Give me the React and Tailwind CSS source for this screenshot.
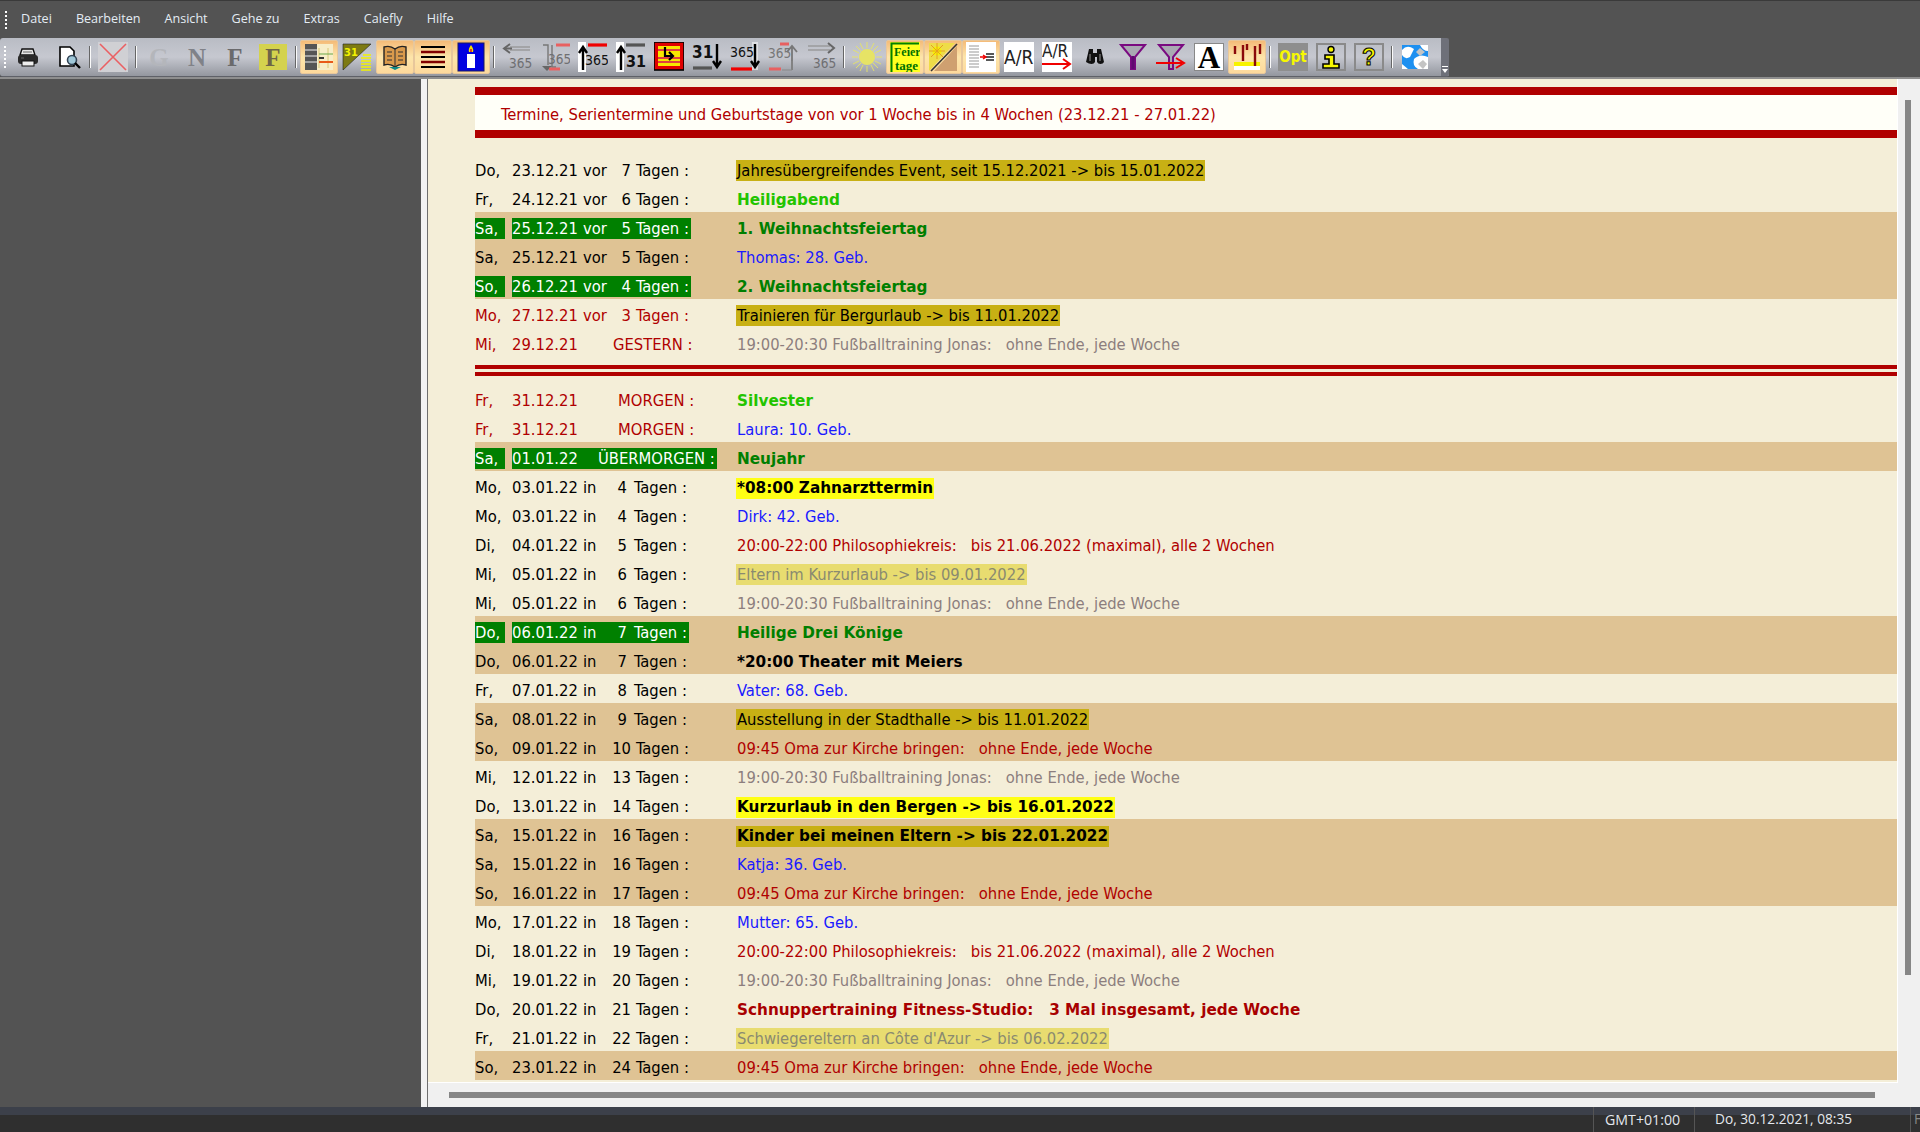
import React from 'react'

const rowsTop = [
  { d: 'Do,', date: '23.12.21', w: 'vor', n: '7', ev: 'Jahresübergreifendes Event, seit 15.12.2021 -> bis 15.01.2022', k: 'olive' },
  { d: 'Fr,', date: '24.12.21', w: 'vor', n: '6', ev: 'Heiligabend', k: 'lime' },
  { d: 'Sa,', date: '25.12.21', w: 'vor', n: '5', ev: '1. Weihnachtsfeiertag', k: 'hol', band: true, green: true },
  { d: 'Sa,', date: '25.12.21', w: 'vor', n: '5', ev: 'Thomas: 28. Geb.', k: 'blue', band: true },
  { d: 'So,', date: '26.12.21', w: 'vor', n: '4', ev: '2. Weihnachtsfeiertag', k: 'hol', band: true, green: true },
  { d: 'Mo,', date: '27.12.21', w: 'vor', n: '3', ev: 'Trainieren für Bergurlaub -> bis 11.01.2022', k: 'olive', red: true },
  { d: 'Mi,', date: '29.12.21', label: 'GESTERN :', pad: 'pl-[101px]', ev: '19:00-20:30 Fußballtraining Jonas:   ohne Ende, jede Woche', k: 'gray', red: true },
]

const rowsBottom = [
  { d: 'Fr,', date: '31.12.21', label: 'MORGEN :', pad: 'pl-[106px]', ev: 'Silvester', k: 'lime', red: true },
  { d: 'Fr,', date: '31.12.21', label: 'MORGEN :', pad: 'pl-[106px]', ev: 'Laura: 10. Geb.', k: 'blue', red: true },
  { d: 'Sa,', date: '01.01.22', label: 'ÜBERMORGEN :', pad: 'pl-[86px]', ev: 'Neujahr', k: 'hol', band: true, green: true },
  { d: 'Mo,', date: '03.01.22', w: 'in', n: '4', ev: '*08:00 Zahnarzttermin', k: 'yellowBold' },
  { d: 'Mo,', date: '03.01.22', w: 'in', n: '4', ev: 'Dirk: 42. Geb.', k: 'blue' },
  { d: 'Di,', date: '04.01.22', w: 'in', n: '5', ev: '20:00-22:00 Philosophiekreis:   bis 21.06.2022 (maximal), alle 2 Wochen', k: 'red' },
  { d: 'Mi,', date: '05.01.22', w: 'in', n: '6', ev: 'Eltern im Kurzurlaub -> bis 09.01.2022', k: 'pale' },
  { d: 'Mi,', date: '05.01.22', w: 'in', n: '6', ev: '19:00-20:30 Fußballtraining Jonas:   ohne Ende, jede Woche', k: 'gray' },
  { d: 'Do,', date: '06.01.22', w: 'in', n: '7', ev: 'Heilige Drei Könige', k: 'hol', band: true, green: true },
  { d: 'Do,', date: '06.01.22', w: 'in', n: '7', ev: '*20:00 Theater mit Meiers', k: 'black', band: true },
  { d: 'Fr,', date: '07.01.22', w: 'in', n: '8', ev: 'Vater: 68. Geb.', k: 'blue' },
  { d: 'Sa,', date: '08.01.22', w: 'in', n: '9', ev: 'Ausstellung in der Stadthalle -> bis 11.01.2022', k: 'olive', band: true },
  { d: 'So,', date: '09.01.22', w: 'in', n: '10', ev: '09:45 Oma zur Kirche bringen:   ohne Ende, jede Woche', k: 'red', band: true },
  { d: 'Mi,', date: '12.01.22', w: 'in', n: '13', ev: '19:00-20:30 Fußballtraining Jonas:   ohne Ende, jede Woche', k: 'gray' },
  { d: 'Do,', date: '13.01.22', w: 'in', n: '14', ev: 'Kurzurlaub in den Bergen -> bis 16.01.2022', k: 'yellowBold' },
  { d: 'Sa,', date: '15.01.22', w: 'in', n: '16', ev: 'Kinder bei meinen Eltern -> bis 22.01.2022', k: 'oliveBold', band: true },
  { d: 'Sa,', date: '15.01.22', w: 'in', n: '16', ev: 'Katja: 36. Geb.', k: 'blue', band: true },
  { d: 'So,', date: '16.01.22', w: 'in', n: '17', ev: '09:45 Oma zur Kirche bringen:   ohne Ende, jede Woche', k: 'red', band: true },
  { d: 'Mo,', date: '17.01.22', w: 'in', n: '18', ev: 'Mutter: 65. Geb.', k: 'blue' },
  { d: 'Di,', date: '18.01.22', w: 'in', n: '19', ev: '20:00-22:00 Philosophiekreis:   bis 21.06.2022 (maximal), alle 2 Wochen', k: 'red' },
  { d: 'Mi,', date: '19.01.22', w: 'in', n: '20', ev: '19:00-20:30 Fußballtraining Jonas:   ohne Ende, jede Woche', k: 'gray' },
  { d: 'Do,', date: '20.01.22', w: 'in', n: '21', ev: 'Schnuppertraining Fitness-Studio:   3 Mal insgesamt, jede Woche', k: 'redBold' },
  { d: 'Fr,', date: '21.01.22', w: 'in', n: '22', ev: "Schwiegereltern an Côte d'Azur -> bis 06.02.2022", k: 'pale' },
  { d: 'So,', date: '23.01.22', w: 'in', n: '24', ev: '09:45 Oma zur Kirche bringen:   ohne Ende, jede Woche', k: 'red', band: true },
]

const boldFace = "font-['DejaVu_Sans',sans-serif] font-bold text-[15.25px]"

const evStyles = {
  olive: 'bg-[#c8b014] text-black px-px -ml-px',
  pale: 'bg-[#e8dc70] text-[#8a8a70] px-px -ml-px',
  lime: `${boldFace} text-[#22c400]`,
  hol: `${boldFace} text-[#007f00]`,
  blue: 'text-[#1a1aff]',
  red: 'text-[#b00000]',
  gray: 'text-[#8c7e7e]',
  black: `${boldFace} text-black`,
  redBold: `${boldFace} text-[#a80000]`,
  yellowBold: `${boldFace} text-black bg-[#ffff14] px-px -ml-px`,
  oliveBold: `${boldFace} text-black bg-[#c8b014] px-px -ml-px`,
}

// the source pads the count with spaces, so one digit "in" rows sit further left
const numClass = (r) => {
  if (r.w === 'vor') return 'w-[19px] text-right'
  if (r.n.length === 1) return 'w-[16px] text-right'
  return 'w-[20px] text-right'
}

const Row = ({ r }) => {
  const tone = r.green ? 'text-white' : r.red ? 'text-[#b00000]' : 'text-black'
  const fill = r.green ? 'bg-[#008000]' : ''
  return (
    <div className={`flex h-[29px] pt-[6px] pb-[2px] leading-[21px] whitespace-pre ${r.band ? 'bg-[#dfc394]' : ''}`}>
      <div className={`w-[37px] ${tone}`}>
        <span className={`inline-block h-[21px] w-[30px] ${fill}`}>{r.d}</span>
      </div>
      <div className={`w-[225px] ${tone}`}>
        <span className={`relative inline-flex h-[21px] pr-[2px] ${fill}`}>
          <span className="w-[71px]">{r.date}</span>
          {r.label ? (
            <span className={`-ml-[71px] ${r.pad}`}>{r.label}</span>
          ) : (
            <>
              <span className={r.w === 'vor' ? 'w-[29px]' : 'w-[28px]'}>{r.w}</span>
              <span className={numClass(r)}>{r.n}</span>
              <span className={r.w === 'in' && r.n.length === 1 ? 'ml-[7px]' : 'ml-[5px]'}>Tagen :</span>
            </>
          )}
        </span>
      </div>
      <div>
        <span className={`inline-block h-[21px] ${evStyles[r.k]}`}>{r.ev}</span>
      </div>
    </div>
  )
}

const T = ({ x, y, s, c, w, f, children }) => (
  <text x={x} y={y} fontSize={s} fill={c} fontWeight={w || 400} fontFamily={f || 'DejaVu Sans Condensed, DejaVu Sans, sans-serif'}>{children}</text>
)

const Ico = ({ children, className = '' }) => (
  <svg viewBox="0 0 30 30" width="30" height="30" className={className}>{children}</svg>
)

const Letter = ({ c, children }) => (
  <span className="font-['Liberation_Serif',serif] font-bold text-[25px] leading-none" style={{ color: c }}>{children}</span>
)

const Btn = ({ active, children }) => (
  <div className={`flex h-[34px] w-[38px] items-center justify-center rounded-[2px] ${active ? 'bg-gradient-to-b from-[#f4bb78] via-[#fde5aa] to-[#fdd99c] border border-[#e8c79b]' : ''}`}>
    {children}
  </div>
)

const Sep = () => (
  <div className="flex h-[34px] w-[8px] items-center justify-center">
    <div className="h-[22px] w-[2px] border-l border-[#666] bg-[#fafafa]" />
  </div>
)

// arrow helpers used by the 365/31 navigation buttons
const arrowUp = (x, c = '#000') => <path d={`M${x} 28V7M${x - 4} 11l4-6 4 6`} stroke={c} strokeWidth="2.4" fill="none" />
const arrowDown = (x, c = '#000') => <path d={`M${x} 2V23M${x - 4} 19l4 6 4-6`} stroke={c} strokeWidth="2.4" fill="none" />

const Toolbar = () => (
  <div className="relative flex h-[39px] w-[1449px] items-center rounded-l-[3px] rounded-tr-[6px] rounded-br-[2px] border-b border-[#5f6168] bg-gradient-to-b from-[#b9bcc4] via-[#c6c8d0] to-[#94979f] pl-[4px]">
    <div className="mr-[4px] h-[22px] w-[2px] border-l-2 border-dotted border-white" />
    <Btn>
      <Ico className="-translate-x-px">
        <path d="M9 7h11l2 6H7z" fill="#e8e8e8" stroke="#111" strokeWidth="1.4" />
        <rect x="5" y="13" width="20" height="9" rx="3" fill="#2a2a2a" />
        <rect x="9" y="19" width="12" height="5" fill="#eee" stroke="#111" />
        <path d="M10 10h9M8 16h3" stroke="#666" />
      </Ico>
    </Btn>
    <Btn>
      <Ico className="translate-x-[2px]">
        <path d="M6 5h10l4 4v15H6z" fill="#fff" stroke="#000" strokeWidth="1.6" />
        <circle cx="18" cy="18" r="4.5" fill="#9fc7d8" stroke="#345" strokeWidth="1.6" />
        <path d="M21 21l5 5" stroke="#000" strokeWidth="2.4" />
      </Ico>
    </Btn>
    <Sep />
    <Btn>
      <Ico className="bg-[#d0d0d4]">
        <path d="M2 2l26 26M28 2L2 28" stroke="#ea5f63" strokeWidth="1.6" />
      </Ico>
    </Btn>
    <Sep />
    <Btn><Letter c="#b4b6bb">G</Letter></Btn>
    <Btn><Letter c="#808288">N</Letter></Btn>
    <Btn><Letter c="#6a6a6c">F</Letter></Btn>
    <Btn>
      <div className="flex h-[26px] w-[28px] items-center justify-center bg-[#d4d24e]"><Letter c="#6e6448">F</Letter></div>
    </Btn>
    <Sep />
    <Btn active>
      <Ico>
        <rect x="1" y="2" width="28" height="26" fill="#f7edc8" />
        <rect x="1" y="2" width="12" height="26" fill="#555" />
        <path d="M1 8h12M1 14h12M1 20h12" stroke="#eee" />
        <path d="M15 6v20M24 6v20" stroke="#d8c878" />
        <path d="M15 12h14" stroke="#6aa84a" /><path d="M15 20h14" stroke="#e85a1a" strokeWidth="2" />
        <path d="M15 16h5" stroke="#333" strokeWidth="2" />
      </Ico>
    </Btn>
    <Btn>
      <Ico>
        <path d="M1 2h28L1 28z" fill="#7d7a14" stroke="#222" strokeWidth=".6" />
        <T x={2} y={14} s={11} c="#f2f200" w={700}>31</T>
        <path d="M21 13h8M19 16h10M19 19h10M19 22h10M19 25h10M19 28h10" stroke="#f2f200" strokeWidth="1.4" />
      </Ico>
    </Btn>
    <Btn active>
      <Ico>
        <path d="M4 5q6-2 11 2q5-4 11-2v18q-6-2-11 2q-5-4-11-2z" fill="#d99a4c" stroke="#222" strokeWidth="1.4" />
        <path d="M15 7v18M7 10h5M7 14h5M7 18h5M18 10h5M18 14h5M18 18h5" stroke="#333" />
        <path d="M9 25h12l-6 3z" fill="#0d8a8a" />
      </Ico>
    </Btn>
    <Btn active>
      <Ico>
        <path d="M3 5h24M3 15h24M3 25h24" stroke="#000" strokeWidth="2" />
        <path d="M3 10h24M3 20h24" stroke="#800000" strokeWidth="2.4" />
      </Ico>
    </Btn>
    <Btn active>
      <Ico>
        <rect x="2" y="1" width="26" height="28" fill="#0000e0" stroke="#1a1a60" />
        <rect x="11" y="12" width="8" height="14" fill="#fff" />
        <path d="M15 3q3 4 2 7h-4q-1-3 2-7z" fill="#f7e000" />
        <path d="M15 7v3" stroke="#d02020" strokeWidth="1.6" />
      </Ico>
    </Btn>
    <Sep />
    <Btn>
      <Ico>
        <path d="M8 5h20M8 8h20" stroke="#9a9a9c" strokeWidth="1.6" />
        <path d="M8 2L2 6.5 8 11" fill="none" stroke="#666" strokeWidth="2" />
        <path d="M2 6.5h8" stroke="#666" strokeWidth="2" />
        <T x={7} y={26} s={13.5} c="#6f6f72">365</T>
      </Ico>
    </Btn>
    <Btn>
      <Ico>
        <path d="M3 3h5v20M12 3v22h4" stroke="#777" fill="none" strokeWidth="1.4" />
        <path d="M16 3h14" stroke="#e86060" strokeWidth="3" />
        <path d="M7 29l-5-5h10z" fill="#666" />
        <path d="M9 27h11" stroke="#e86060" strokeWidth="3" />
        <T x={8} y={22} s={13.5} c="#6f6f72">365</T>
      </Ico>
    </Btn>
    <Btn>
      <Ico>
        <rect x="0" y="0" width="8" height="30" fill="#fff" />
        {arrowUp(5)}
        <path d="M10 3h19" stroke="#f00000" strokeWidth="3.2" />
        <T x={7} y={23} s={14} c="#111">365</T>
      </Ico>
    </Btn>
    <Btn>
      <Ico>
        <rect x="0" y="0" width="8" height="30" fill="#fff" />
        {arrowUp(5)}
        <path d="M10 3h19" stroke="#555" strokeWidth="3.2" />
        <T x={10} y={25} s={16} c="#111" w={700}>31</T>
      </Ico>
    </Btn>
    <Btn>
      <Ico>
        <rect x="0" y="0" width="30" height="28" fill="#e00000" stroke="#000" strokeWidth="1.6" />
        <rect x="4" y="4" width="22" height="20" fill="#f7e600" />
        <path d="M4 8h22M4 16h22M4 20h22" stroke="#e04040" strokeWidth="1.8" />
        <path d="M11 5v9h7M15 10l4 4-4 4" fill="none" stroke="#000" strokeWidth="2.2" />
      </Ico>
    </Btn>
    <Btn>
      <Ico>
        <T x={0} y={16} s={17} c="#111" w={700}>31</T>
        {arrowDown(25)}
        <path d="M1 26h19" stroke="#555" strokeWidth="3.2" />
      </Ico>
    </Btn>
    <Btn>
      <Ico>
        <rect x="22" y="0" width="6" height="28" fill="#fff" opacity=".5" />
        <T x={0} y={15} s={14} c="#111">365</T>
        {arrowDown(25)}
        <path d="M1 27h21" stroke="#f00000" strokeWidth="3.2" />
      </Ico>
    </Btn>
    <Btn>
      <Ico>
        <T x={0} y={16} s={13.5} c="#777">365</T>
        <path d="M12 2h9M1 27h12" stroke="#e86060" strokeWidth="3" />
        <path d="M24 28V5M19 10l5-6 5 6" fill="none" stroke="#777" strokeWidth="1.8" />
        <path d="M14 28h10V19" stroke="#888" fill="none" />
      </Ico>
    </Btn>
    <Btn>
      <Ico>
        <path d="M2 4h22M2 8h22" stroke="#9a9a9c" strokeWidth="1.6" />
        <path d="M22 1l6 5-6 5" fill="none" stroke="#666" strokeWidth="2" />
        <T x={7} y={26} s={13.5} c="#6f6f72">365</T>
      </Ico>
    </Btn>
    <Sep />
    <Btn>
      <Ico>
        <circle cx="15" cy="15" r="8" fill="#e6e365" />
        <path d="M15 0v6M15 24v6M0 15h6M24 15h6M4 4l5 5M21 21l5 5M26 4l-5 5M9 21l-5 5M8 1l3 6M22 1l-3 6M8 29l3-6M22 29l-3-6M1 8l6 3M29 8l-6 3M1 22l6-3M29 22l-6-3" stroke="#e6e365" strokeWidth=".9" />
      </Ico>
    </Btn>
    <Btn active>
      <Ico className="bg-[#ffff20]">
        <path d="M1.5 30V1.5H29" stroke="#008000" fill="none" strokeWidth="2" />
        <T x={4} y={14} s={12} c="#007000" w={700} f="Liberation Serif, serif">Feier</T>
        <T x={5} y={28} s={13} c="#007000" w={700} f="Liberation Serif, serif">tage</T>
      </Ico>
    </Btn>
    <Btn active>
      <Ico>
        <path d="M1 1h26L1 29z" fill="#eedc48" />
        <circle cx="9" cy="9" r="4.5" fill="#f7f300" />
        <path d="M9 1v16M1 9h16M3 3l12 12M15 3L3 15" stroke="#e6a020" />
        <path d="M29 4v25H6z" fill="#cfa070" />
        <path d="M29 2L3 29" stroke="#333" strokeWidth="1.6" />
      </Ico>
    </Btn>
    <Btn active>
      <Ico className="bg-white">
        <path d="M3 4h10M3 7h10M3 10h10M3 13h10M3 16h10M3 19h10M3 22h10M3 25h10" stroke="#999" />
        <path d="M20 12h8M20 15h8M20 18h8" stroke="#222" strokeWidth="1.6" />
        <path d="M14 15h5M17 13l3 2-3 2" stroke="#f00000" fill="none" strokeWidth="1.4" />
      </Ico>
    </Btn>
    <Btn>
      <Ico className="bg-white">
        <T x={0} y={22} s={19} c="#222">A/R</T>
      </Ico>
    </Btn>
    <Btn>
      <Ico className="bg-white">
        <T x={0} y={15} s={17} c="#222">A/R</T>
        <path d="M0 22h27M21 17l7 5-7 5" stroke="#f00000" fill="none" strokeWidth="2" />
      </Ico>
    </Btn>
    <Btn>
      <Ico>
        <path d="M9 7h4v4h4V7h4l3 13q-1 2-3.500 2t-3.500-2v-5h-2v5q-1 2-3.500 2T6 20z" fill="#111" />
        <path d="M10 12v7M20 12v7" stroke="#999" />
      </Ico>
    </Btn>
    <Btn>
      <Ico>
        <path d="M3 3h24L17 15v12h-4V15z" fill="#a9a9b2" stroke="#7a0a80" strokeWidth="2" />
        <path d="M15 14v13" stroke="#600a70" strokeWidth="3" />
      </Ico>
    </Btn>
    <Btn>
      <Ico>
        <path d="M3 3h24L17 15v12h-4V15z" fill="#a9a9b2" stroke="#7a0a80" strokeWidth="2" />
        <path d="M0 21h26M20 16l8 5-8 5" stroke="#f00000" fill="none" strokeWidth="2" />
      </Ico>
    </Btn>
    <Btn>
      <div className="flex h-[28px] w-[30px] items-center justify-center border border-[#888] bg-white">
        <span className="font-['Liberation_Serif',serif] text-[31px] font-bold leading-none text-black">A</span>
      </div>
    </Btn>
    <Btn active>
      <Ico>
        <rect x="2" y="20" width="26" height="4" fill="#f7f300" />
        <rect x="2" y="24" width="26" height="4" fill="#fff" />
        <path d="M3 4v8M11 3v16M15 2v6M23 4v20M28 2v10" stroke="#8a0a0a" strokeWidth="2.4" />
      </Ico>
    </Btn>
    <Sep />
    <Btn>
      <div className="flex h-[28px] w-[30px] items-center justify-center bg-[#8e8e8e] font-['DejaVu_Sans_Condensed','DejaVu_Sans',sans-serif] text-[15px] font-bold leading-none text-[#f7f700]">Opt</div>
    </Btn>
    <Btn>
      <div className="flex h-[28px] w-[30px] items-center justify-center border-2 border-[#8a8a8a]">
        <svg viewBox="0 0 24 24" width="24" height="24">
          <circle cx="12" cy="4.500" r="3" fill="#f7f700" stroke="#000" strokeWidth="1.4" />
          <path d="M6 10h9v9h5v4H4v-4h6v-5H6z" fill="#f7f700" stroke="#000" strokeWidth="1.6" />
        </svg>
      </div>
    </Btn>
    <Btn>
      <div className="flex h-[28px] w-[30px] items-center justify-center border-2 border-[#8a8a8a]">
        <span className="font-['Liberation_Sans',sans-serif] text-[23px] font-bold leading-none text-[#f7f700] [-webkit-text-stroke:1px_#000]">?</span>
      </div>
    </Btn>
    <Sep />
    <Btn>
      <Ico>
        <rect x="2" y="3" width="26" height="24" fill="#1e90f0" />
        <path d="M2 8q5-6 12-1l-4 8q-5 3-8-2zM14 17q6-6 14-2v12H18q-6-3-4-10zM2 22l6 5H2zM20 3h8v6q-5 0-8-6z" fill="#fff" />
        <path d="M16 10l4-4 5 4-5 4zM18 22l5-4 4 4-4 5z" fill="#c4c4c4" />
      </Ico>
    </Btn>
    <div className="absolute bottom-0 right-0 top-0 flex w-[8px] flex-col items-center justify-end rounded-r-[2px] bg-[#6e7079] pb-[3px]">
      <div className="mb-[2px] h-px w-[6px] bg-white" />
      <div className="h-0 w-0 border-x-[3px] border-t-[4px] border-x-transparent border-t-white" />
    </div>
  </div>
)

export default function App() {
  return (
    <div className="flex h-[1132px] w-[1920px] flex-col overflow-hidden bg-[#535353] font-['DejaVu_Sans_Condensed','DejaVu_Sans',sans-serif] text-[16.45px]">
      {/* menu */}
      <div className="flex h-[38px] shrink-0 items-center border-t border-[#3a3a3a] pl-[5px] font-['Open_Sans',sans-serif] text-[12.6px] text-[#e4ecf4]">
        <div className="mr-[14px] h-[18px] w-[2px] border-l-2 border-dotted border-white" />
        <div className="flex gap-[24px]">
          <span>Datei</span>
          <span>Bearbeiten</span>
          <span>Ansicht</span>
          <span>Gehe zu</span>
          <span>Extras</span>
          <span>Calefly</span>
          <span>Hilfe</span>
        </div>
      </div>

      <Toolbar />
      <div className="h-[2px] shrink-0 bg-[#8e8e8e]" />

      <div className="flex min-h-0 flex-1">
        <div className="w-[421px] shrink-0 bg-[#535353]" />
        <div className="w-[6px] shrink-0 bg-[#f2f2f2]" />
        <div className="w-px shrink-0 bg-[#6e6e6e]" />

        {/* report */}
        <div className="flex min-w-0 flex-1 flex-col bg-[#f0f0f0]">
          <div className="flex min-h-0 flex-1">
            <div className="h-[1004px] w-[1470px] border-b border-r border-white bg-[#f4eed8] pl-[47px] pt-[8px]">
              <div className="h-[51px] border-y-[8px] border-[#b00000] bg-[#fffff8] pl-[26px] pt-[2px] leading-[35px] text-[#b00000]">
                Termine, Serientermine und Geburtstage von vor 1 Woche bis in 4 Wochen (23.12.21 - 27.01.22)
              </div>
              <div className="mt-[16px]">
                {rowsTop.map((r, i) => <Row key={i} r={r} />)}
              </div>
              <div className="mt-[8px] h-[11px] border-y-[4px] border-[#b00000]" />
              <div className="mt-[8px]">
                {rowsBottom.map((r, i) => <Row key={i} r={r} />)}
              </div>
            </div>
            <div className="relative flex-1">
              <div className="absolute left-[7px] top-[21px] h-[875px] w-[6px] bg-[#868686]" />
            </div>
          </div>
          <div className="relative h-[24px] shrink-0">
            <div className="absolute left-[21px] top-[9px] h-[6px] w-[1426px] bg-[#868686]" />
          </div>
        </div>
      </div>

      {/* status bar */}
      <div className="flex h-[25px] shrink-0 items-center border-t-[8px] border-[#3c404a] bg-[#2f2f2f] font-['Open_Sans',sans-serif] text-[13.7px] text-[#e4e8ee]">
        <div className="h-[25px] w-[1593px] shrink-0" />
        <div className="-mt-[8px] flex h-[25px] w-[101px] shrink-0 items-center border-l border-[#555] pl-[11px] text-[14.2px]">GMT+01:00</div>
        <div className="-mt-[8px] flex h-[25px] w-[216px] shrink-0 items-center border-l border-[#555] pl-[20px]">Do, 30.12.2021, 08:35</div>
        <div className="-mt-[8px] flex h-[25px] flex-1 items-center overflow-hidden border-l border-[#555] pl-[3px] text-[#888]">F</div>
      </div>
    </div>
  )
}
